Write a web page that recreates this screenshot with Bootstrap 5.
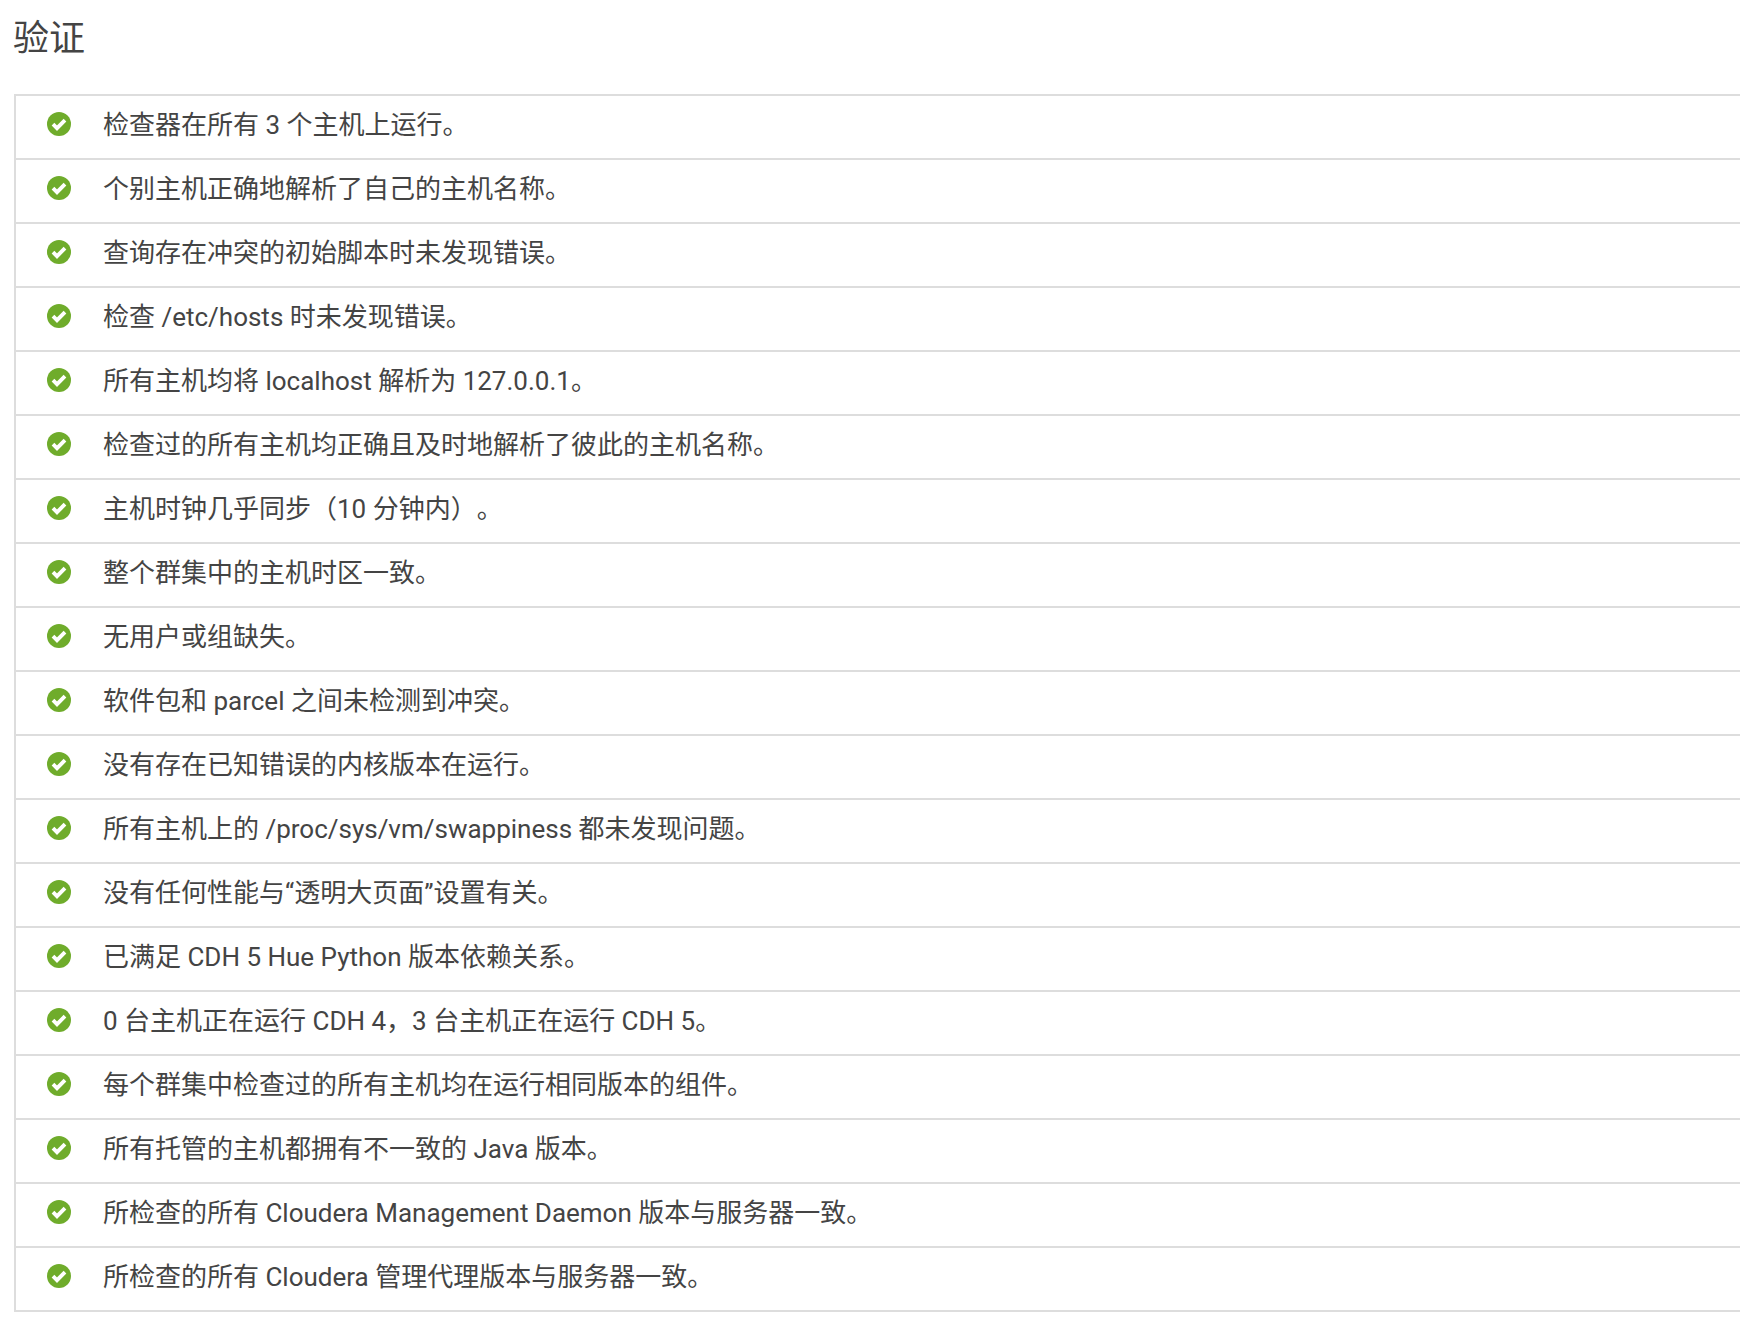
<!DOCTYPE html>
<html lang="zh"><head><meta charset="utf-8">
<link rel="stylesheet" href="https://cdn.jsdelivr.net/npm/bootstrap@5.3.0/dist/css/bootstrap.min.css">
<style>
html,body{height:1326px;overflow:hidden}
body{background:#fff;color:#444;font-family:Roboto,"Noto Sans CJK SC",sans-serif;padding:0 0 0 14px;text-spacing-trim:space-all}
.vtitle{font-size:36px;line-height:40px;font-weight:400;margin:19px 0 0 -1px;height:75px}
.vlist{width:1740px}
.vrow{border:solid #ddd;border-width:0 0 2px 2px;height:64px;font-size:26px;line-height:30px;padding:0 0 6px 31px;gap:32px;color:#444}
.vrow:first-child{border-top-width:2px;height:66px}
.vrow span{padding-top:2px}
.vico{width:24px;height:24px;flex:none}
</style></head><body>
<h1 class="vtitle">验证</h1>
<div class="vlist d-flex flex-column">
<div class="vrow d-flex align-items-center"><svg class="vico" viewBox="0 0 24 24"><circle cx="12" cy="12" r="12" fill="#6fac2b"/><path d="M6 12.2l4 4 8-8" fill="none" stroke="#fff" stroke-width="3.8"/></svg><span>检查器在所有 3 个主机上运行。</span></div>
<div class="vrow d-flex align-items-center"><svg class="vico" viewBox="0 0 24 24"><circle cx="12" cy="12" r="12" fill="#6fac2b"/><path d="M6 12.2l4 4 8-8" fill="none" stroke="#fff" stroke-width="3.8"/></svg><span>个别主机正确地解析了自己的主机名称。</span></div>
<div class="vrow d-flex align-items-center"><svg class="vico" viewBox="0 0 24 24"><circle cx="12" cy="12" r="12" fill="#6fac2b"/><path d="M6 12.2l4 4 8-8" fill="none" stroke="#fff" stroke-width="3.8"/></svg><span>查询存在冲突的初始脚本时未发现错误。</span></div>
<div class="vrow d-flex align-items-center"><svg class="vico" viewBox="0 0 24 24"><circle cx="12" cy="12" r="12" fill="#6fac2b"/><path d="M6 12.2l4 4 8-8" fill="none" stroke="#fff" stroke-width="3.8"/></svg><span>检查 /etc/hosts 时未发现错误。</span></div>
<div class="vrow d-flex align-items-center"><svg class="vico" viewBox="0 0 24 24"><circle cx="12" cy="12" r="12" fill="#6fac2b"/><path d="M6 12.2l4 4 8-8" fill="none" stroke="#fff" stroke-width="3.8"/></svg><span>所有主机均将 localhost 解析为 127.0.0.1。</span></div>
<div class="vrow d-flex align-items-center"><svg class="vico" viewBox="0 0 24 24"><circle cx="12" cy="12" r="12" fill="#6fac2b"/><path d="M6 12.2l4 4 8-8" fill="none" stroke="#fff" stroke-width="3.8"/></svg><span>检查过的所有主机均正确且及时地解析了彼此的主机名称。</span></div>
<div class="vrow d-flex align-items-center"><svg class="vico" viewBox="0 0 24 24"><circle cx="12" cy="12" r="12" fill="#6fac2b"/><path d="M6 12.2l4 4 8-8" fill="none" stroke="#fff" stroke-width="3.8"/></svg><span>主机时钟几乎同步（10 分钟内）。</span></div>
<div class="vrow d-flex align-items-center"><svg class="vico" viewBox="0 0 24 24"><circle cx="12" cy="12" r="12" fill="#6fac2b"/><path d="M6 12.2l4 4 8-8" fill="none" stroke="#fff" stroke-width="3.8"/></svg><span>整个群集中的主机时区一致。</span></div>
<div class="vrow d-flex align-items-center"><svg class="vico" viewBox="0 0 24 24"><circle cx="12" cy="12" r="12" fill="#6fac2b"/><path d="M6 12.2l4 4 8-8" fill="none" stroke="#fff" stroke-width="3.8"/></svg><span>无用户或组缺失。</span></div>
<div class="vrow d-flex align-items-center"><svg class="vico" viewBox="0 0 24 24"><circle cx="12" cy="12" r="12" fill="#6fac2b"/><path d="M6 12.2l4 4 8-8" fill="none" stroke="#fff" stroke-width="3.8"/></svg><span>软件包和 parcel 之间未检测到冲突。</span></div>
<div class="vrow d-flex align-items-center"><svg class="vico" viewBox="0 0 24 24"><circle cx="12" cy="12" r="12" fill="#6fac2b"/><path d="M6 12.2l4 4 8-8" fill="none" stroke="#fff" stroke-width="3.8"/></svg><span>没有存在已知错误的内核版本在运行。</span></div>
<div class="vrow d-flex align-items-center"><svg class="vico" viewBox="0 0 24 24"><circle cx="12" cy="12" r="12" fill="#6fac2b"/><path d="M6 12.2l4 4 8-8" fill="none" stroke="#fff" stroke-width="3.8"/></svg><span>所有主机上的 /proc/sys/vm/swappiness 都未发现问题。</span></div>
<div class="vrow d-flex align-items-center"><svg class="vico" viewBox="0 0 24 24"><circle cx="12" cy="12" r="12" fill="#6fac2b"/><path d="M6 12.2l4 4 8-8" fill="none" stroke="#fff" stroke-width="3.8"/></svg><span>没有任何性能与“透明大页面”设置有关。</span></div>
<div class="vrow d-flex align-items-center"><svg class="vico" viewBox="0 0 24 24"><circle cx="12" cy="12" r="12" fill="#6fac2b"/><path d="M6 12.2l4 4 8-8" fill="none" stroke="#fff" stroke-width="3.8"/></svg><span>已满足 CDH 5 Hue Python 版本依赖关系。</span></div>
<div class="vrow d-flex align-items-center"><svg class="vico" viewBox="0 0 24 24"><circle cx="12" cy="12" r="12" fill="#6fac2b"/><path d="M6 12.2l4 4 8-8" fill="none" stroke="#fff" stroke-width="3.8"/></svg><span>0 台主机正在运行 CDH 4，3 台主机正在运行 CDH 5。</span></div>
<div class="vrow d-flex align-items-center"><svg class="vico" viewBox="0 0 24 24"><circle cx="12" cy="12" r="12" fill="#6fac2b"/><path d="M6 12.2l4 4 8-8" fill="none" stroke="#fff" stroke-width="3.8"/></svg><span>每个群集中检查过的所有主机均在运行相同版本的组件。</span></div>
<div class="vrow d-flex align-items-center"><svg class="vico" viewBox="0 0 24 24"><circle cx="12" cy="12" r="12" fill="#6fac2b"/><path d="M6 12.2l4 4 8-8" fill="none" stroke="#fff" stroke-width="3.8"/></svg><span>所有托管的主机都拥有不一致的 Java 版本。</span></div>
<div class="vrow d-flex align-items-center"><svg class="vico" viewBox="0 0 24 24"><circle cx="12" cy="12" r="12" fill="#6fac2b"/><path d="M6 12.2l4 4 8-8" fill="none" stroke="#fff" stroke-width="3.8"/></svg><span>所检查的所有 Cloudera Management Daemon 版本与服务器一致。</span></div>
<div class="vrow d-flex align-items-center"><svg class="vico" viewBox="0 0 24 24"><circle cx="12" cy="12" r="12" fill="#6fac2b"/><path d="M6 12.2l4 4 8-8" fill="none" stroke="#fff" stroke-width="3.8"/></svg><span>所检查的所有 Cloudera 管理代理版本与服务器一致。</span></div>
</div>
</body></html>
